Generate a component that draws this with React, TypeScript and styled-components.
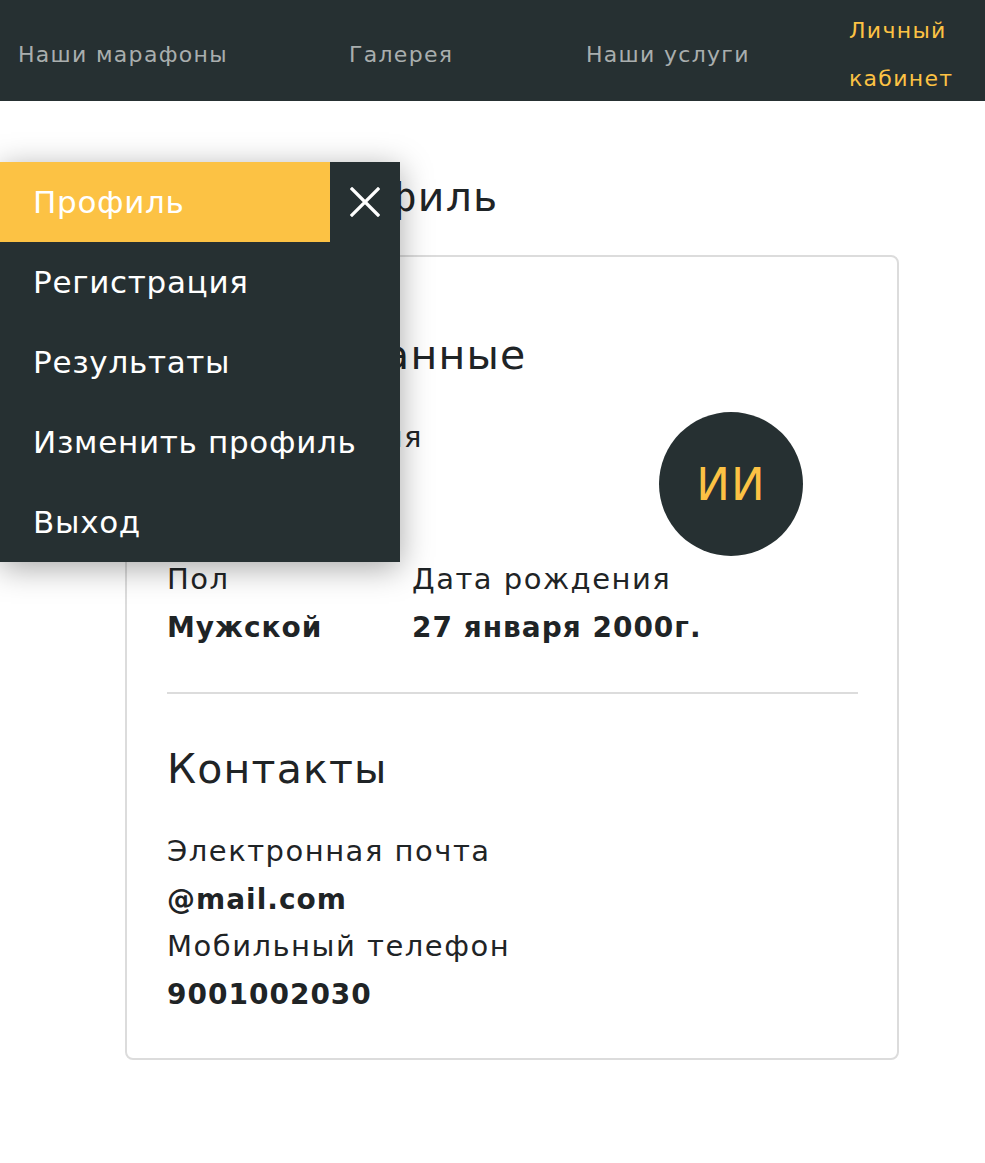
import React from "react";
import styled, { createGlobalStyle } from "styled-components";

const GlobalStyle = createGlobalStyle`
  html, body { margin: 0; padding: 0; background: #ffffff; }
  body { font-family: "DejaVu Sans", "Noto Sans", sans-serif; color: #1f2426; }
  * { box-sizing: border-box; }
`;

const DARK = "#263032";
const YELLOW = "#fcc244";

const Page = styled.div`
  position: relative;
  width: 985px;
  min-height: 1163px;
`;

const Header = styled.header`
  height: 101px;
  background: ${DARK};
  display: flex;
  align-items: center;
  padding: 8px 0 0 18px;
`;

const NavItem = styled.a<{ $w?: number; $active?: boolean }>`
  flex: 0 0 ${(p) => (p.$w ? `${p.$w}px` : "auto")};
  font-size: 22px;
  line-height: 48px;
  letter-spacing: 1.3px;
  font-weight: 400;
  color: ${(p) => (p.$active ? YELLOW : "#a9aeae")};
  text-decoration: none;
  max-width: ${(p) => (p.$active ? "120px" : "none")};
`;

const Main = styled.main`
  padding: 72px 0 0 125px;
`;

const PageTitle = styled.h1`
  margin: 0 0 34px 171px;
  font-size: 41px;
  line-height: 48px;
  letter-spacing: 1.2px;
  font-weight: 400;
`;

const Card = styled.section`
  width: 774px;
  border: 2px solid #dcdcdc;
  border-radius: 8px;
  padding: 74px 39px 40px 40px;
`;

const SectionTitle = styled.h2<{ $top?: number }>`
  margin: ${(p) => p.$top ?? 0}px 0 0 0;
  font-size: 41px;
  line-height: 48px;
  letter-spacing: 1.2px;
  font-weight: 400;
`;

const InfoGrid = styled.div<{ $cols: string; $top?: number }>`
  display: grid;
  grid-template-columns: ${(p) => p.$cols};
  align-items: start;
  margin-top: ${(p) => p.$top ?? 0}px;
`;

const Field = styled.div<{ $pad?: number }>`
  display: flex;
  flex-direction: column;
  padding-top: ${(p) => p.$pad ?? 0}px;
`;

const Label = styled.span`
  font-size: 29px;
  line-height: 47.5px;
  letter-spacing: 1.5px;
  font-weight: 400;
  white-space: nowrap;
`;

const Value = styled.span`
  font-size: 28px;
  line-height: 47.5px;
  letter-spacing: 1px;
  font-weight: 700;
  white-space: nowrap;
`;

const Avatar = styled.div`
  width: 144px;
  height: 144px;
  border-radius: 50%;
  background: ${DARK};
  color: ${YELLOW};
  display: flex;
  align-items: center;
  justify-content: center;
  font-size: 45px;
  letter-spacing: 1px;
  font-weight: 400;
`;

const Divider = styled.hr`
  margin: 41px 0 0 0;
  border: none;
  height: 2px;
  background: #dcdcdc;
`;

const Contacts = styled.div`
  display: flex;
  flex-direction: column;
  margin-top: 35px;
`;

const Menu = styled.nav`
  position: absolute;
  left: 0;
  top: 162px;
  width: 400px;
  background: ${DARK};
  box-shadow: 0 6px 30px rgba(0, 0, 0, 0.35);
  display: flex;
  flex-direction: column;
`;

const MenuTop = styled.div`
  display: flex;
  height: 80px;
`;

const MenuItem = styled.a<{ $active?: boolean }>`
  flex: ${(p) => (p.$active ? "0 0 330px" : "none")};
  height: 80px;
  display: flex;
  align-items: center;
  padding-left: 33px;
  font-size: 31px;
  letter-spacing: 0.7px;
  font-weight: 400;
  color: #ffffff;
  background: ${(p) => (p.$active ? YELLOW : "transparent")};
  text-decoration: none;
  white-space: nowrap;
`;

const CloseButton = styled.button`
  flex: 1;
  border: none;
  background: transparent;
  display: flex;
  align-items: center;
  justify-content: center;
  padding: 0;
  cursor: pointer;
`;

export default function App() {
  return (
    <>
      <GlobalStyle />
      <Page>
        <Header>
          <NavItem $w={331}>Наши марафоны</NavItem>
          <NavItem $w={237}>Галерея</NavItem>
          <NavItem $w={263}>Наши услуги</NavItem>
          <NavItem $active>Личный кабинет</NavItem>
        </Header>
        <Main>
          <PageTitle>Профиль</PageTitle>
          <Card>
            <SectionTitle>Личные данные</SectionTitle>
            <InfoGrid $cols="492px 144px" $top={33}>
              <Field $pad={1.5}>
                <Label>Имя и фамилия</Label>
                <Value>Иван Иванов</Value>
              </Field>
              <Avatar>ИИ</Avatar>
            </InfoGrid>
            <InfoGrid $cols="245px 1fr">
              <Field>
                <Label>Пол</Label>
                <Value>Мужской</Value>
              </Field>
              <Field>
                <Label>Дата рождения</Label>
                <Value>27 января 2000г.</Value>
              </Field>
            </InfoGrid>
            <Divider />
            <SectionTitle $top={51}>Контакты</SectionTitle>
            <Contacts>
              <Label>Электронная почта</Label>
              <Value>@mail.com</Value>
              <Label>Мобильный телефон</Label>
              <Value>9001002030</Value>
            </Contacts>
          </Card>
        </Main>
        <Menu>
          <MenuTop>
            <MenuItem $active>Профиль</MenuItem>
            <CloseButton aria-label="Закрыть">
              <svg width="30" height="30" viewBox="0 0 30 30">
                <path d="M2 2 L28 28 M28 2 L2 28" stroke="#ffffff" strokeWidth="3.2" strokeLinecap="square" />
              </svg>
            </CloseButton>
          </MenuTop>
          <MenuItem>Регистрация</MenuItem>
          <MenuItem>Результаты</MenuItem>
          <MenuItem>Изменить профиль</MenuItem>
          <MenuItem>Выход</MenuItem>
        </Menu>
      </Page>
    </>
  );
}
